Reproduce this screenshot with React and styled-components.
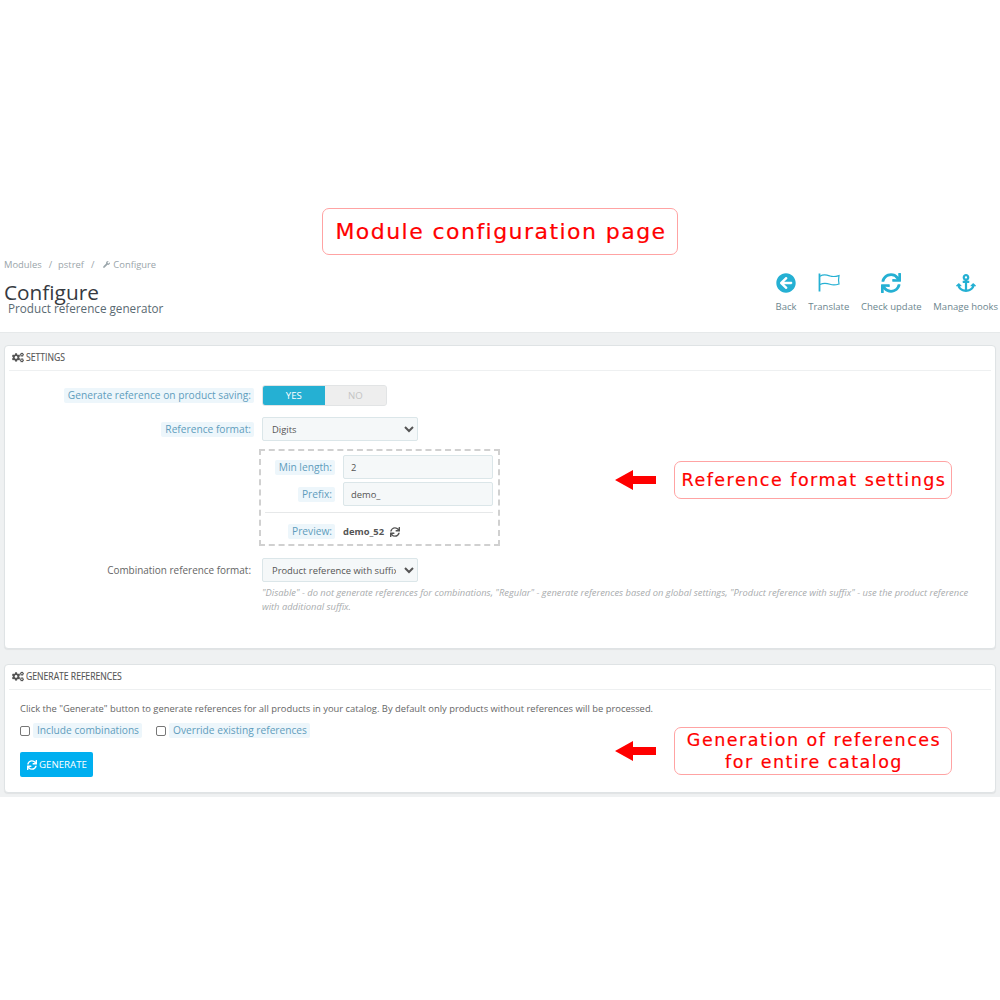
import React from 'react';
import styled, { createGlobalStyle } from 'styled-components';
import { FaAnchor, FaArrowCircleLeft, FaCogs, FaSync, FaWrench } from 'react-icons/fa';

const GlobalStyle = createGlobalStyle`
  html, body { margin: 0; padding: 0; background: #fff; }
  body { font-family: "Open Sans", "Liberation Sans", sans-serif; color: #555; }
  * { box-sizing: border-box; }
`;

const Page = styled.div`
  width: 1000px;
  height: 1000px;
  overflow: hidden;
  background: #fff;
`;

const Hero = styled.div`
  display: flex;
  justify-content: center;
  padding-top: 208px;
  height: 258px;
`;

const Callout = styled.div`
  display: flex;
  align-items: center;
  justify-content: center;
  text-align: center;
  width: ${({ $width }) => $width}px;
  height: ${({ $height }) => $height}px;
  padding-left: 2px;
  border: 1.5px solid #ffa3a3;
  border-radius: 7px;
  background: #fff;
  color: #ff0000;
  font-family: "DejaVu Sans", Verdana, sans-serif;
  font-size: ${({ $size }) => $size}px;
  line-height: 22px;
  letter-spacing: ${({ $spacing }) => $spacing}px;
  -webkit-text-stroke: 0.2px #ff0000;
`;

const Header = styled.header`
  display: flex;
  justify-content: space-between;
  height: 74px;
  padding: 0 2px 0 4px;
`;

const TitleBlock = styled.div`
  padding-top: 0;
`;

const Breadcrumb = styled.div`
  display: flex;
  align-items: center;
  height: 13px;
  font-size: 9.4px;
  color: #9aa5aa;
`;

const Slash = styled.span`
  margin: 0 6px 0 7px;
`;

const CrumbIcon = styled(FaWrench)`
  width: 7px;
  height: 7px;
  margin: 0 3px 0 3px;
`;

const Title = styled.h1`
  margin: 11px 0 0;
  font-size: 20.8px;
  line-height: 20px;
  font-weight: 400;
  color: #363a41;
`;

const Subtitle = styled.div`
  margin: -2px 0 0 4px;
  font-size: 11.7px;
  line-height: 16px;
  color: #5a6a72;
`;

const Toolbar = styled.div`
  display: flex;
  gap: 11.7px;
  padding-top: 14px;
`;

const ToolItem = styled.div`
  display: flex;
  flex-direction: column;
  align-items: center;
  font-size: 9.5px;
  line-height: 13px;
  color: #6c868e;
`;

const ToolIcon = styled.div`
  display: flex;
  align-items: center;
  justify-content: center;
  height: 22px;
  margin-bottom: 6px;
  color: #25b0d3;
  font-size: 20px;
`;

const Content = styled.main`
  position: relative;
  height: 465px;
  padding: 12px 4px 0;
  background: #eff1f2;
  border-top: 1px solid #e6e9ea;
`;

const Panel = styled.section`
  height: ${({ $height }) => $height}px;
  margin-bottom: 15px;
  padding: 0 4px;
  background: #fff;
  border: 1px solid #dfe3e5;
  border-radius: 4px;
  box-shadow: 0 1px 1px rgba(0, 0, 0, 0.06);
`;

const PanelHeading = styled.h2`
  display: flex;
  align-items: center;
  gap: 2px;
  height: 25px;
  margin: 0;
  padding: 0 0 2px 3px;
  border-bottom: 1px solid #eef0f1;
  font-size: 10.5px;
  font-weight: 400;
  color: #555;
  -webkit-text-stroke: 0.15px #555;
`;

const Narrow = styled.span`
  display: inline-block;
  transform: scaleX(0.82);
  transform-origin: left center;
`;

const HeadingIcon = styled(FaCogs)`
  width: 12px;
  height: 11px;
  color: #555;
`;

const Form = styled.div`
  padding-top: 14px;
`;

const Row = styled.div`
  display: grid;
  grid-template-columns: 245px 1fr;
  column-gap: 8px;
  align-items: center;
  margin-bottom: ${({ $gap }) => $gap || 0}px;
`;

const LabelCell = styled.div`
  display: flex;
  justify-content: flex-end;
`;

const HintLabel = styled.span`
  display: block;
  padding: 0 3px 0 4px;
  font-size: 10.2px;
  line-height: 15px;
  border-radius: 2px;
  background: #edf6fb;
  color: #5f9dbd;
`;

const PlainLabel = styled.span`
  padding-right: 3px;
  font-size: 9.95px;
  color: #666;
`;

const Switch = styled.div`
  display: flex;
  width: 125px;
  height: 21px;
  border-radius: 3px;
  overflow: hidden;
  background: #eee;
  border: 1px solid #e2e4e5;
`;

const SwitchOption = styled.div`
  display: flex;
  align-items: center;
  justify-content: center;
  flex: 1;
  font-size: 9.6px;
  background: ${({ $on }) => ($on ? '#25b0d3' : '#eeeeee')};
  color: ${({ $on }) => ($on ? '#fff' : '#c4c4c4')};
`;

const Select = styled.select`
  display: block;
  width: 156px;
  height: 24px;
  padding: 0 5px;
  font-family: inherit;
  font-size: 9.4px;
  color: #555;
  background: #f5f8f9;
  border: 1px solid #dbe6e9;
  border-radius: 2px;
  outline: none;
`;

const DashedBox = styled.div`
  width: 241px;
  height: 97px;
  margin: 8px 0 12px 250px;
  padding: 4px 5px 0 0;
  border: 2px dashed #d0d0d0;
`;

const InnerRow = styled.div`
  display: grid;
  grid-template-columns: 74px 150px;
  column-gap: 8px;
  align-items: center;
  margin-bottom: 3px;
`;

const Input = styled.input`
  display: block;
  width: 150px;
  height: 24px;
  padding: 0 7px;
  font-family: inherit;
  font-size: 9.4px;
  color: #555;
  background: #f5f8f9;
  border: 1px solid #dbe6e9;
  border-radius: 2px;
  outline: none;
`;

const InnerRule = styled.div`
  height: 1px;
  margin: 6px 0 11px 4px;
  background: #e6e8e9;
`;

const PreviewValue = styled.div`
  display: flex;
  align-items: center;
  gap: 6px;
  font-size: 9.4px;
  font-weight: 700;
  color: #555;
`;

const Help = styled.p`
  margin: 4px 10px 0 253px;
  font-size: 9.35px;
  line-height: 13.5px;
  font-style: italic;
  color: #a9acae;
`;

const Generate = styled.div`
  padding: 12px 0 0 11px;
`;

const Intro = styled.p`
  margin: 0;
  font-size: 9.4px;
  line-height: 14px;
  color: #666;
`;

const Checks = styled.div`
  display: flex;
  gap: 14px;
  margin: 7px 0 14px;
`;

const Check = styled.label`
  display: flex;
  align-items: center;
  gap: 3px;
`;

const Box = styled.input`
  width: 10px;
  height: 10px;
  margin: 0;
  appearance: none;
  background: #fff;
  border: 1px solid #777;
  border-radius: 2px;
`;

const GenerateButton = styled.button`
  display: flex;
  align-items: center;
  gap: 2px;
  width: 73px;
  height: 25px;
  padding: 0 0 0 7px;
  border: 0;
  border-radius: 2px;
  font-family: inherit;
  font-size: 9.7px;
  color: #fff;
  background: #00aff0;
`;

const Annotation = styled.div`
  position: absolute;
  left: 615px;
  top: ${({ $top }) => $top}px;
  display: flex;
  align-items: center;
  gap: 18px;
`;

const FlagIcon = () => (
  <svg width="22" height="20" viewBox="0 0 22 20" fill="none" stroke="currentColor">
    <path d="M1.5 0.5V18.5" strokeWidth="1.8" />
    <path d="M2 3.2C6 0.8 9 2 12 3C15 4 18 3.5 21 2.6C20.4 5.5 20.4 8 21 11C18 12 15 12.3 12 11.3C9 10.3 6 9.6 2 11.5" strokeWidth="1.2" />
  </svg>
);

const RedArrow = () => (
  <svg width="41" height="20" viewBox="0 0 41 20">
    <polygon points="0,10 18,0 18,6 41,6 41,14 18,14 18,20" fill="#ff0000" />
  </svg>
);

const tools = [
  { label: 'Back', icon: <FaArrowCircleLeft /> },
  { label: 'Translate', icon: <FlagIcon /> },
  { label: 'Check update', icon: <FaSync /> },
  { label: 'Manage hooks', icon: <FaAnchor /> },
];

const App = () => {
  return (
    <Page>
      <GlobalStyle />
      <Hero>
        <Callout $width={356} $height={47} $size={22} $spacing={1.45}>Module configuration page</Callout>
      </Hero>
      <Header>
        <TitleBlock>
          <Breadcrumb>
            Modules<Slash>/</Slash>pstref<Slash>/</Slash><CrumbIcon />Configure
          </Breadcrumb>
          <Title>Configure</Title>
          <Subtitle>Product reference generator</Subtitle>
        </TitleBlock>
        <Toolbar>
          {tools.map((tool) => (
            <ToolItem key={tool.label}>
              <ToolIcon>{tool.icon}</ToolIcon>
              {tool.label}
            </ToolItem>
          ))}
        </Toolbar>
      </Header>
      <Content>
        <Panel $height={304}>
          <PanelHeading><HeadingIcon /><Narrow>SETTINGS</Narrow></PanelHeading>
          <Form>
            <Row $gap={11}>
              <LabelCell><HintLabel>Generate reference on product saving:</HintLabel></LabelCell>
              <Switch>
                <SwitchOption $on>YES</SwitchOption>
                <SwitchOption>NO</SwitchOption>
              </Switch>
            </Row>
            <Row>
              <LabelCell><HintLabel>Reference format:</HintLabel></LabelCell>
              <Select defaultValue="digits">
                <option value="digits">Digits</option>
              </Select>
            </Row>
            <DashedBox>
              <InnerRow>
                <LabelCell><HintLabel>Min length:</HintLabel></LabelCell>
                <Input defaultValue="2" />
              </InnerRow>
              <InnerRow>
                <LabelCell><HintLabel>Prefix:</HintLabel></LabelCell>
                <Input defaultValue="demo_" />
              </InnerRow>
              <InnerRule />
              <InnerRow>
                <LabelCell><HintLabel>Preview:</HintLabel></LabelCell>
                <PreviewValue>demo_52 <FaSync size={10} /></PreviewValue>
              </InnerRow>
            </DashedBox>
            <Row>
              <LabelCell><PlainLabel>Combination reference format:</PlainLabel></LabelCell>
              <Select defaultValue="suffix">
                <option value="suffix">Product reference with suffix</option>
              </Select>
            </Row>
            <Help>
              "Disable" - do not generate references for combinations, "Regular" - generate references based on global settings, "Product reference with suffix" - use the product reference with additional suffix.
            </Help>
          </Form>
        </Panel>
        <Panel $height={129}>
          <PanelHeading><HeadingIcon /><Narrow>GENERATE REFERENCES</Narrow></PanelHeading>
          <Generate>
            <Intro>Click the "Generate" button to generate references for all products in your catalog. By default only products without references will be processed.</Intro>
            <Checks>
              <Check><Box type="checkbox" /><HintLabel>Include combinations</HintLabel></Check>
              <Check><Box type="checkbox" /><HintLabel>Override existing references</HintLabel></Check>
            </Checks>
            <GenerateButton><FaSync size={10} />GENERATE</GenerateButton>
          </Generate>
        </Panel>
        <Annotation $top={128}>
          <RedArrow />
          <Callout $width={278} $height={38} $size={17.5} $spacing={1.5}>Reference format settings</Callout>
        </Annotation>
        <Annotation $top={394}>
          <RedArrow />
          <Callout $width={278} $height={48} $size={17.5} $spacing={1.5}>Generation of references<br />for entire catalog</Callout>
        </Annotation>
      </Content>
    </Page>
  );
};

export default App;
